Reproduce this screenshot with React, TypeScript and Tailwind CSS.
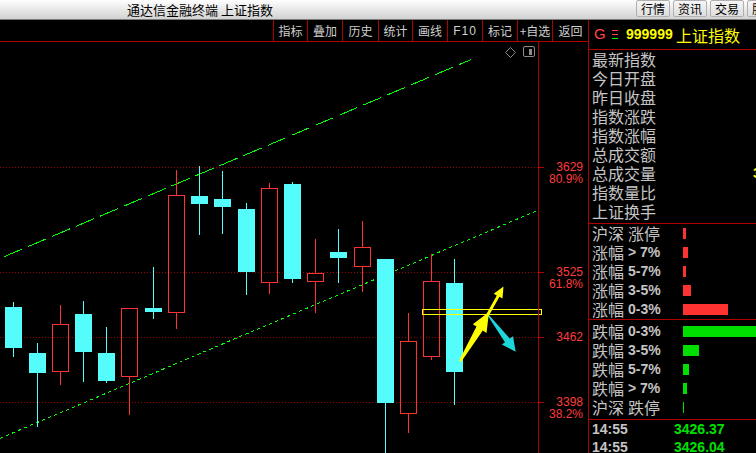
import React from 'react';

// [left, bodyTop, bodyBottom, wickTop, wickBottom, isRed]
type Candle = [number, number, number, number, number, boolean];

const candles: Candle[] = [
  [5, 307, 348, 302, 357, false],
  [29, 353, 373, 343, 427, false],
  [52, 324, 372, 305, 385, true],
  [75, 314, 352, 301, 382, false],
  [98, 353, 381, 327, 383, false],
  [121, 308, 377, 308, 415, true],
  [145, 308, 312, 267, 319, false],
  [168, 195, 313, 170, 329, true],
  [191, 196, 204, 166, 235, false],
  [214, 199, 207, 171, 234, false],
  [238, 209, 272, 203, 295, false],
  [261, 188, 283, 183, 294, true],
  [284, 184, 279, 182, 283, false],
  [307, 273, 282, 239, 313, true],
  [330, 252, 258, 229, 283, false],
  [354, 247, 267, 221, 292, true],
  [377, 259, 403, 259, 453, false],
  [400, 341, 414, 313, 433, true],
  [423, 281, 357, 254, 360, true],
  [446, 283, 372, 259, 405, false],
];

const CYAN = '#54fcfc';
const RED = '#ff3232';
const AXIS = '#b00000';

const tools = [
  { label: '指标', w: 'w-[34px]' },
  { label: '叠加', w: 'w-[35px]' },
  { label: '历史', w: 'w-[36px]' },
  { label: '统计', w: 'w-[34px]' },
  { label: '画线', w: 'w-[35px]' },
  { label: 'F10', w: 'w-[35px]' },
  { label: '标记', w: 'w-[35px]' },
  { label: '+自选', w: 'w-[35px]' },
  { label: '返回', w: 'w-[36px]' },
];

const quoteRows = ['最新指数', '今日开盘', '昨日收盘', '指数涨跌', '指数涨幅', '总成交额', '总成交量', '指数量比', '上证换手'];

const upRows = [
  { a: '沪深', b: '涨停', ascii: false, w: 3 },
  { a: '涨幅', b: '> 7%', ascii: true, w: 5 },
  { a: '涨幅', b: '5-7%', ascii: true, w: 3 },
  { a: '涨幅', b: '3-5%', ascii: true, w: 8 },
  { a: '涨幅', b: '0-3%', ascii: true, w: 45 },
];

const downRows = [
  { a: '跌幅', b: '0-3%', ascii: true, w: 80 },
  { a: '跌幅', b: '3-5%', ascii: true, w: 16 },
  { a: '跌幅', b: '5-7%', ascii: true, w: 6 },
  { a: '跌幅', b: '> 7%', ascii: true, w: 4 },
  { a: '沪深', b: '跌停', ascii: false, w: 1 },
];

const axisLabels = [
  { y: 167, t: '3629' },
  { y: 179, t: '80.9%' },
  { y: 272, t: '3525' },
  { y: 284, t: '61.8%' },
  { y: 337, t: '3462' },
  { y: 402, t: '3398' },
  { y: 414, t: '38.2%' },
];

const Chart: React.FC = () => (
  <svg width={588} height={411} viewBox="0 42 588 411" className="block">
    {/* dotted price grid */}
    {[167, 272, 337, 402].map((y) => (
      <line key={y} x1={0} y1={y + 0.5} x2={538} y2={y + 0.5} stroke="#9a0000" strokeDasharray="1 2" shapeRendering="crispEdges" />
    ))}

    {/* channel lines */}
    <line x1={4} y1={256.7} x2={471} y2={59.6} stroke="#00ff00" strokeDasharray="19.5 6.5" shapeRendering="crispEdges" />
    <line x1={0} y1={438.3} x2={538} y2={210.3} stroke="#00ff00" strokeDasharray="3.3 3.2" shapeRendering="crispEdges" />

    {/* candles */}
    {candles.map(([x, top, bot, wt, wb, red], i) =>
      red ? (
        <g key={i} shapeRendering="crispEdges">
          {wt < top && <rect x={x + 8} y={wt} width={1} height={top - wt} fill={RED} />}
          {wb > bot && <rect x={x + 8} y={bot} width={1} height={wb - bot} fill={RED} />}
          <rect x={x + 0.5} y={top + 0.5} width={16} height={bot - top - 1} fill="none" stroke={RED} />
        </g>
      ) : (
        <g key={i} shapeRendering="crispEdges">
          <rect x={x + 8} y={wt} width={1} height={wb - wt} fill={CYAN} />
          <rect x={x} y={top} width={17} height={bot - top} fill={CYAN} />
        </g>
      )
    )}

    {/* marked price box */}
    <rect x={422.5} y={309.5} width={119} height={5} fill="none" stroke="#ffff00" shapeRendering="crispEdges" />

    {/* arrows */}
    <polygon points="488,314 509.8,338.6 513,336.3 515.7,351.7 501.8,344.5 505,342.2 487.3,315" fill="#1cd6da" />
    <polygon points="459.1,360.5 476.5,326.5 472.8,324.2 489,312 486.5,333 482.8,330.5 461,362" fill="#ffff00" />
    <polygon points="485.7,315.3 496.8,295.4 493.7,293.7 503.5,286.5 502.5,298.5 499.4,296.8 488.3,316.7" fill="#ffff00" />

    {/* right axis */}
    <line x1={538.5} y1={42} x2={538.5} y2={453} stroke={AXIS} shapeRendering="crispEdges" />
    {[167, 272, 337, 402].map((y) => (
      <line key={y} x1={538} y1={y + 0.5} x2={544} y2={y + 0.5} stroke={AXIS} shapeRendering="crispEdges" />
    ))}
    {axisLabels.map((l) => (
      <text key={l.t} x={583} y={l.y + 4.3} textAnchor="end" fontSize={12} fontFamily="'Liberation Sans', Arial, sans-serif" fill="#ff3c3c">
        {l.t}
      </text>
    ))}

    {/* top right tools */}
    <polygon points="510.5,47.5 515.5,52.5 510.5,57.5 505.5,52.5" fill="none" stroke="#8c8c8c" />
    <rect x={523.5} y={46.5} width={11} height={10} rx={1.5} fill="none" stroke="#8c8c8c" />
    <rect x={529} y={49} width={3} height={6} fill="#8c8c8c" />
  </svg>
);

const BarRow: React.FC<{ a: string; b: string; ascii: boolean; w: number; color: string }> = ({ a, b, ascii, w, color }) => (
  <div className="h-[19px] flex items-center pl-[3px]">
    <div className="w-[91px] shrink-0 flex items-center text-[16px] leading-[17px] text-[#c4c4c4]">
      <span>{a}</span>
      {ascii ? (
        <span className="ml-[4px] text-[14px] font-bold font-['Liberation_Sans',Arial,sans-serif]">{b}</span>
      ) : (
        <span className="ml-[4px]">{b}</span>
      )}
    </div>
    <div className={`h-[11px] shrink-0 ${color}`} style={{ width: w }} />
  </div>
);

export default function App() {
  return (
    <div className="w-[756px] h-[453px] bg-black overflow-hidden flex flex-col font-['Noto_Sans_CJK_SC',sans-serif]">
      {/* window title bar */}
      <div className="h-[20px] shrink-0 flex overflow-hidden bg-gradient-to-b from-[#ffffff] to-[#d2d2d2] border-b border-[#7c7c7c]">
        <div className="w-[636px] shrink-0 pl-[127px] text-[13px] leading-[19px] text-black">通达信金融终端 上证指数</div>
        <div className="flex gap-[3px]">
          {['行情', '资讯', '交易', '服务'].map((t) => (
            <div
              key={t}
              className="w-[34px] h-[17px] shrink-0 flex items-center justify-center text-[12px] text-black bg-gradient-to-b from-[#f6f6f6] to-[#dedede] border border-[#b0b0b0] rounded-[2px]"
            >
              {t}
            </div>
          ))}
        </div>
      </div>

      <div className="flex flex-1 min-h-0">
        {/* chart column */}
        <div className="w-[588px] shrink-0 flex flex-col">
          <div className="h-[22px] shrink-0 flex justify-end border-b border-[#b00000]">
            {tools.map((t) => (
              <div
                key={t.label}
                className={`${t.w} h-full border-l border-[#b00000] flex items-center justify-center text-[12px] text-[#cfcfcf] ${t.label === 'F10' ? "font-['Liberation_Sans',Arial,sans-serif] tracking-[1px]" : ''}`}
              >
                {t.label}
              </div>
            ))}
          </div>
          <Chart />
        </div>

        {/* quote panel */}
        <div className="flex-1 min-w-0 border-l border-[#b00000] flex flex-col overflow-hidden">
          <div className="h-[30px] shrink-0 border-b border-[#b00000] flex items-center pl-[5px]">
            <span className="w-[18px] shrink-0 text-[15px] text-[#ff4646] font-['Liberation_Sans',Arial,sans-serif]">G</span>
            <span className="w-[14px] shrink-0 flex flex-col gap-[2.7px]">
              <span className="block w-[6px] h-[1px] bg-[#ff4646]" />
              <span className="block w-[6px] h-[1px] bg-[#ff4646]" />
              <span className="block w-[6px] h-[1px] bg-[#00ff00]" />
            </span>
            <span className="w-[50px] shrink-0 text-[14px] font-bold text-[#ffff00] font-['Liberation_Sans',Arial,sans-serif]">999999</span>
            <span className="text-[16px] text-[#ffff00] whitespace-nowrap">上证指数</span>
          </div>

          <div className="shrink-0 border-b border-[#b00000] pb-[2px]">
            {quoteRows.map((r) => (
              <div key={r} className="h-[19px] flex items-center pl-[3px] text-[16px] leading-[17px] text-[#c4c4c4] whitespace-nowrap">
                <span className="w-[161px] shrink-0">{r}</span>
                {r === '总成交量' && (
                  <span className="text-[14px] font-bold text-[#ffff00] font-['Liberation_Sans',Arial,sans-serif]">3426</span>
                )}
              </div>
            ))}
          </div>

          <div className="shrink-0 border-b border-[#b00000]">
            {upRows.map((r, i) => (
              <BarRow key={i} {...r} color="bg-[#ff3232]" />
            ))}
          </div>

          <div className="shrink-0 border-b border-[#b00000] py-[2px]">
            {downRows.map((r, i) => (
              <BarRow key={i} {...r} color="bg-[#00e000]" />
            ))}
          </div>

          <div className="font-['Liberation_Sans',Arial,sans-serif] font-bold text-[14px]">
            {[
              ['14:55', '3426.37'],
              ['14:55', '3426.04'],
            ].map(([t, v], i) => (
              <div key={i} className="h-[18px] flex items-center pl-[3px] whitespace-nowrap">
                <span className="w-[82px] shrink-0 text-[#c4c4c4]">{t}</span>
                <span className="text-[#00e000]">{v}</span>
              </div>
            ))}
          </div>
        </div>
      </div>
    </div>
  );
}
